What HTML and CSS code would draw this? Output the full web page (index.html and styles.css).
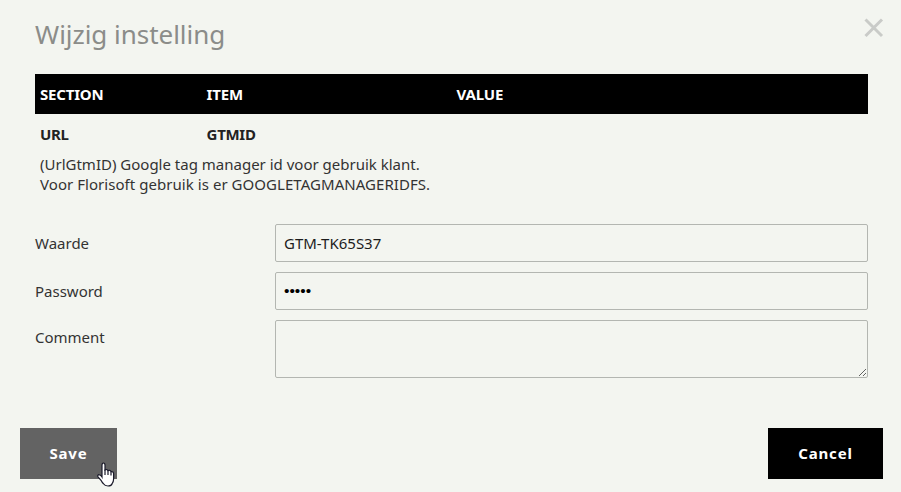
FILE: index.html
```
<!DOCTYPE html>
<html lang="nl">
<head>
<meta charset="utf-8">
<title>Wijzig instelling</title>
<link rel="stylesheet" href="styles.css">
</head>
<body>
<main class="dialog">
  <header class="dialog-header">
    <h1 class="title">Wijzig instelling</h1>
    <button class="close" type="button" aria-label="Close">
      <svg width="20" height="20" viewBox="0 0 20 20"><path d="M1.5 1.5 18 18M18 1.5 1.5 18"/></svg>
    </button>
  </header>
  <section class="setting">
    <div class="row head"><span>SECTION</span><span>ITEM</span><span>VALUE</span></div>
    <div class="row values"><span>URL</span><span>GTMID</span><span></span></div>
    <p class="description"><span>(UrlGtmID) Google tag manager id voor gebruik klant.</span><br><span class="line-two">Voor Florisoft gebruik is er GOOGLETAGMANAGERIDFS.</span></p>
  </section>
  <form class="fields">
    <label for="value">Waarde</label>
    <input id="value" type="text" value="GTM-TK65S37">
    <label for="password">Password</label>
    <input id="password" class="secret" type="password" value="abcde">
    <label for="comment" class="comment-label">Comment</label>
    <textarea id="comment"></textarea>
  </form>
  <footer class="actions">
    <button class="btn save" type="button">Save
      <svg class="cursor" width="20" height="26" viewBox="0 0 20 26"><path d="M6 15V3.2Q6 1 7.5 1T9 3.2V8Q11 6.8 12 8.6Q14 7.6 15 9.6Q17.6 9.2 17.6 12V17Q17.6 19.5 16.2 21.5Q15.5 24 12 24Q8.8 24 7.5 21.8Q6 20.4 5 18.3L2 14.8Q1.2 13.2 2.8 12.6Q4.6 12.6 6 15Z"/><path d="M9 7.5V13M12 8.6V13M15 9.6V13.5"/></svg>
    </button>
    <button class="btn cancel" type="button">Cancel</button>
  </footer>
</main>
</body>
</html>
```
FILE: styles.css
```
* { box-sizing: border-box; }
body {
  margin: 0;
  background: #f3f5f0;
  color: #333;
  font: 15px/20px "Noto Sans", sans-serif;
  overflow: hidden;
}
.dialog { height: 492px; display: flex; flex-direction: column; }
.dialog-header {
  height: 74px;
  padding: 17px 17px 0 35px;
  display: flex;
  justify-content: space-between;
  align-items: flex-start;
}
.title { margin: 0; font-size: 26px; line-height: 34px; font-weight: 400; color: #8b8c89; letter-spacing: -.03px; }
.close { display: flex; padding: 1px 0 0; border: 0; background: none; }
.close svg { stroke: #c9cbc8; stroke-width: 3; fill: none; }
.setting { margin: 0 33px 0 35px; }
.row { display: grid; grid-template-columns: 166.6px 250px 1fr; height: 40px; align-items: center; padding-left: 5px; font-weight: 700; }
.head { background: #000; color: #fff; letter-spacing: -.2px; }
.values { color: #222; letter-spacing: -.3px; }
.description { margin: 0; padding-left: 5px; }
.line-two { letter-spacing: .05px; }
.fields {
  margin: 30px 33px 0 35px;
  display: grid;
  grid-template-columns: 240px 1fr;
  grid-template-rows: 38px 38px 58px;
  row-gap: 10px;
  align-items: center;
}
input, textarea {
  width: 100%;
  height: 100%;
  margin: 0;
  padding: 0 8px;
  border: 1px solid #b3b6b1;
  border-radius: 2px;
  background: transparent;
  color: #1c1c1c;
  font: inherit;
}
.secret { color: #000; font: 15.5px/20px "Liberation Sans", sans-serif; }
.comment-label { align-self: start; padding-top: 7px; }
.actions { margin: 50px 18px 0 20px; display: flex; justify-content: space-between; }
.btn {
  position: relative;
  height: 51px;
  padding: 0 0 2px;
  border: 0;
  color: #fff;
  font: 700 15px/20px "Noto Sans", sans-serif;
  letter-spacing: .8px;
}
.save { width: 97px; background: #636363; }
.cancel { width: 115px; background: #000; }
.cursor { position: absolute; left: 76px; top: 34px; fill: #fff; stroke: #1a1a2a; stroke-width: 1.2; }
```
